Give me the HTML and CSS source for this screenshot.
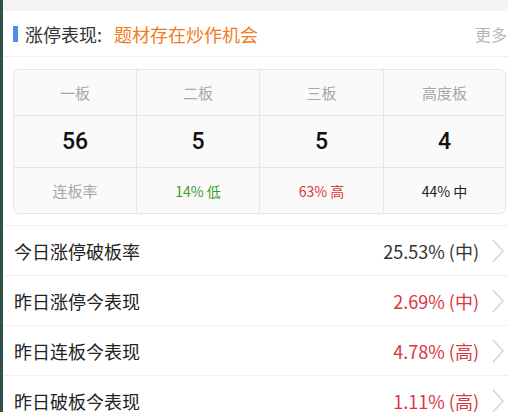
FILE: index.html
```html
<!DOCTYPE html>
<html>
<head>
<meta charset="utf-8">
<link rel="stylesheet" href="styles.css">
</head>
<body>
<div class="page">
  <div class="topband"></div>
  <div class="header">
    <div class="title"><span class="bar"></span><span class="label">涨停表现:</span><span class="theme">题材存在炒作机会</span></div>
    <div class="more">更多</div>
  </div>
  <div class="cardwrap">
    <div class="card">
      <div class="cell head">一板</div>
      <div class="cell head">二板</div>
      <div class="cell head">三板</div>
      <div class="cell head">高度板</div>
      <div class="cell num">56</div>
      <div class="cell num">5</div>
      <div class="cell num">5</div>
      <div class="cell num">4</div>
      <div class="cell rate">连板率</div>
      <div class="cell rate green">14% 低</div>
      <div class="cell rate red">63% 高</div>
      <div class="cell rate dark">44% 中</div>
    </div>
  </div>
  <div class="list">
    <div class="row"><span class="name">今日涨停破板率</span><span class="val">25.53% (中)</span><svg class="chev" viewBox="0 0 12 24"><polyline points="1,1 11,12 1,23"/></svg></div>
    <div class="row"><span class="name">昨日涨停今表现</span><span class="val red">2.69% (中)</span><svg class="chev" viewBox="0 0 12 24"><polyline points="1,1 11,12 1,23"/></svg></div>
    <div class="row"><span class="name">昨日连板今表现</span><span class="val red">4.78% (高)</span><svg class="chev" viewBox="0 0 12 24"><polyline points="1,1 11,12 1,23"/></svg></div>
    <div class="row"><span class="name">昨日破板今表现</span><span class="val red">1.11% (高)</span><svg class="chev" viewBox="0 0 12 24"><polyline points="1,1 11,12 1,23"/></svg></div>
  </div>
</div>
</body>
</html>
```
FILE: styles.css
```css
* { box-sizing: border-box; }
html, body { margin: 0; padding: 0; }
body {
  width: 508px;
  height: 412px;
  overflow: hidden;
  background: #fff;
  font-family: "Noto Sans CJK SC", "Noto Sans", sans-serif;
}
.page {
  border-left: 3px solid #2f5148;
  height: 412px;
}
.topband { height: 11px; background: #f3f3f3; }
.header {
  height: 46px;
  display: flex;
  align-items: center;
  justify-content: space-between;
  padding: 0 0 0 10px;
  border-bottom: 1px solid #f0f0f0;
}
.title { display: flex; align-items: center; font-size: 18px; }
.bar { width: 5px; height: 16px; background: #4a8fe8; margin-right: 7px; }
.label { color: #333; }
.theme { color: #f07c22; margin-left: 12px; }
.more { color: #b5b5b5; font-size: 16px; margin-right: 1px; }
.cardwrap { padding: 12px 2px 11px 10px; border-bottom: 1px solid #f0f0f0; }
.card {
  display: grid;
  grid-template-columns: 123px 123px 124px 1fr;
  grid-template-rows: 46px 52px 45px;
  border: 1px solid #e6e6e6;
  border-radius: 6px;
  background: #fafafa;
  overflow: hidden;
}
.cell {
  display: flex;
  align-items: center;
  justify-content: center;
  border-right: 1px solid #e6e6e6;
  border-bottom: 1px solid #e6e6e6;
}
.cell:nth-child(4n) { border-right: none; }
.cell:nth-child(n+9) { border-bottom: none; }
.head { color: #a8a8a8; font-size: 15px; }
.num { color: #111; font-size: 23px; font-weight: 500; font-family: "Roboto", "Noto Sans", sans-serif; }
.rate { color: #a8a8a8; font-size: 15px; }
.rate.green { color: #3d9a2c; font-size: 14px; }
.rate.red { color: #d9363e; font-size: 14px; }
.rate.dark { color: #222; font-size: 14px; }
.row {
  height: 50px;
  display: flex;
  align-items: center;
  padding: 0 0 0 11px;
  border-bottom: 1px solid #f0f0f0;
}
.name { flex: 1; color: #222; font-size: 18px; }
.val { color: #333; font-size: 18px; }
.val.red { color: #d9363e; }
.chev {
  width: 12px; height: 24px;
  margin: 0 4px 0 13px;
  fill: none;
  stroke: #d4d4d4;
  stroke-width: 1.5;
}
```
